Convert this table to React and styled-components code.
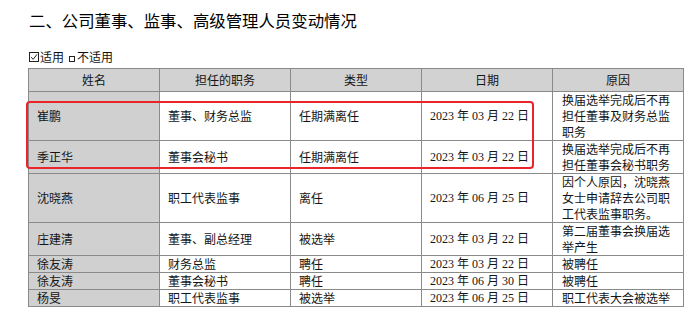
import React from "react";
import styled, { createGlobalStyle } from "styled-components";

const Global = createGlobalStyle`
  html, body { margin: 0; padding: 0; background: #fff; }
  body { font-family: "Noto Sans CJK SC", "Noto Sans", sans-serif; color: #111; }
`;

const Page = styled.div`
  width: 700px;
  height: 317px;
  box-sizing: border-box;
  padding: 8px 0 0 28px;
  overflow: hidden;
`;

const Title = styled.h2`
  margin: 0 0 0 1px;
  font-size: 16.4px;
  line-height: 24px;
  font-weight: 400;
  color: #000;
  white-space: nowrap;
`;

const Options = styled.div`
  margin: 17px 0 3px 1px;
  display: flex;
  align-items: center;
  font-size: 12px;
  line-height: 16px;
  height: 16px;
  color: #111;
`;

const CheckBox = styled.span`
  width: 8px;
  height: 8px;
  border: 1px solid #222;
  display: inline-flex;
  align-items: center;
  justify-content: center;
  margin-right: 1px;
`;

const EmptyBox = styled.span`
  width: 4px;
  height: 4px;
  border: 1px solid #222;
  display: inline-block;
  margin: 4px 2px 0 5px;
`;

const TableWrap = styled.div`
  position: relative;
  width: 655px;
`;

const Table = styled.table`
  border-collapse: collapse;
  table-layout: fixed;
  width: 655px;
  font-size: 12px;
  line-height: 16px;
  color: #151515;
`;

const Th = styled.th`
  background: #d2d2d2;
  border: 1px solid #8a8a8a;
  font-weight: 400;
  padding: 3px 8px;
  text-align: center;
`;

const Row = styled.tr`
  border-top: 1px solid ${(p) => (p.$light ? "#d2d2d2" : "#8a8a8a")};
`;

const Td = styled.td`
  border-left: 1px solid #8a8a8a;
  border-right: 1px solid #8a8a8a;
  border-bottom: 1px solid #8a8a8a;
  padding: 0 8px;
  vertical-align: middle;
  text-align: left;
  background: ${(p) => (p.$shade ? "#d1d0d1" : "#fff")};
  font-family: ${(p) =>
    p.$date
      ? '"Liberation Serif", "Noto Sans CJK SC", serif'
      : '"Noto Sans CJK SC", sans-serif'};
  ${(p) => (p.$reason ? "padding-left: 9px; padding-right: 6px;" : "")}
`;

const Highlight = styled.div`
  position: absolute;
  left: -2px;
  top: 33px;
  width: 508px;
  height: 68px;
  box-sizing: border-box;
  border: 2px solid #e8262a;
  border-radius: 4px;
  pointer-events: none;
`;

const rows = [
  { name: "崔鹏", role: "董事、财务总监", type: "任期满离任", date: "2023 年 03 月 22 日", reason: "换届选举完成后不再担任董事及财务总监职务" },
  { name: "季正华", role: "董事会秘书", type: "任期满离任", date: "2023 年 03 月 22 日", reason: "换届选举完成后不再担任董事会秘书职务", light: true },
  { name: "沈晓燕", role: "职工代表监事", type: "离任", date: "2023 年 06 月 25 日", reason: "因个人原因，沈晓燕女士申请辞去公司职工代表监事职务。" },
  { name: "庄建清", role: "董事、副总经理", type: "被选举", date: "2023 年 03 月 22 日", reason: "第二届董事会换届选举产生" },
  { name: "徐友涛", role: "财务总监", type: "聘任", date: "2023 年 03 月 22 日", reason: "被聘任" },
  { name: "徐友涛", role: "董事会秘书", type: "聘任", date: "2023 年 06 月 30 日", reason: "被聘任" },
  { name: "杨旻", role: "职工代表监事", type: "被选举", date: "2023 年 06 月 25 日", reason: "职工代表大会被选举" },
];

export default function App() {
  return (
    <Page>
      <Global />
      <Title>二、公司董事、监事、高级管理人员变动情况</Title>
      <Options>
        <CheckBox>
          <svg width="8" height="8" viewBox="0 0 8 8">
            <path d="M1 4.2 L3.2 6.3 L7 1.4" fill="none" stroke="#222" strokeWidth="1" />
          </svg>
        </CheckBox>
        适用
        <EmptyBox />
        不适用
      </Options>
      <TableWrap>
        <Table>
          <colgroup>
            <col style={{ width: 131 }} />
            <col style={{ width: 131 }} />
            <col style={{ width: 131 }} />
            <col style={{ width: 131 }} />
            <col style={{ width: 131 }} />
          </colgroup>
          <thead>
            <tr>
              <Th>姓名</Th>
              <Th>担任的职务</Th>
              <Th>类型</Th>
              <Th>日期</Th>
              <Th>原因</Th>
            </tr>
          </thead>
          <tbody>
            {rows.map((r, i) => (
              <Row key={i} $light={r.light}>
                <Td $shade>{r.name}</Td>
                <Td>{r.role}</Td>
                <Td>{r.type}</Td>
                <Td $date>{r.date}</Td>
                <Td $reason>{r.reason}</Td>
              </Row>
            ))}
          </tbody>
        </Table>
        <Highlight />
      </TableWrap>
    </Page>
  );
}
